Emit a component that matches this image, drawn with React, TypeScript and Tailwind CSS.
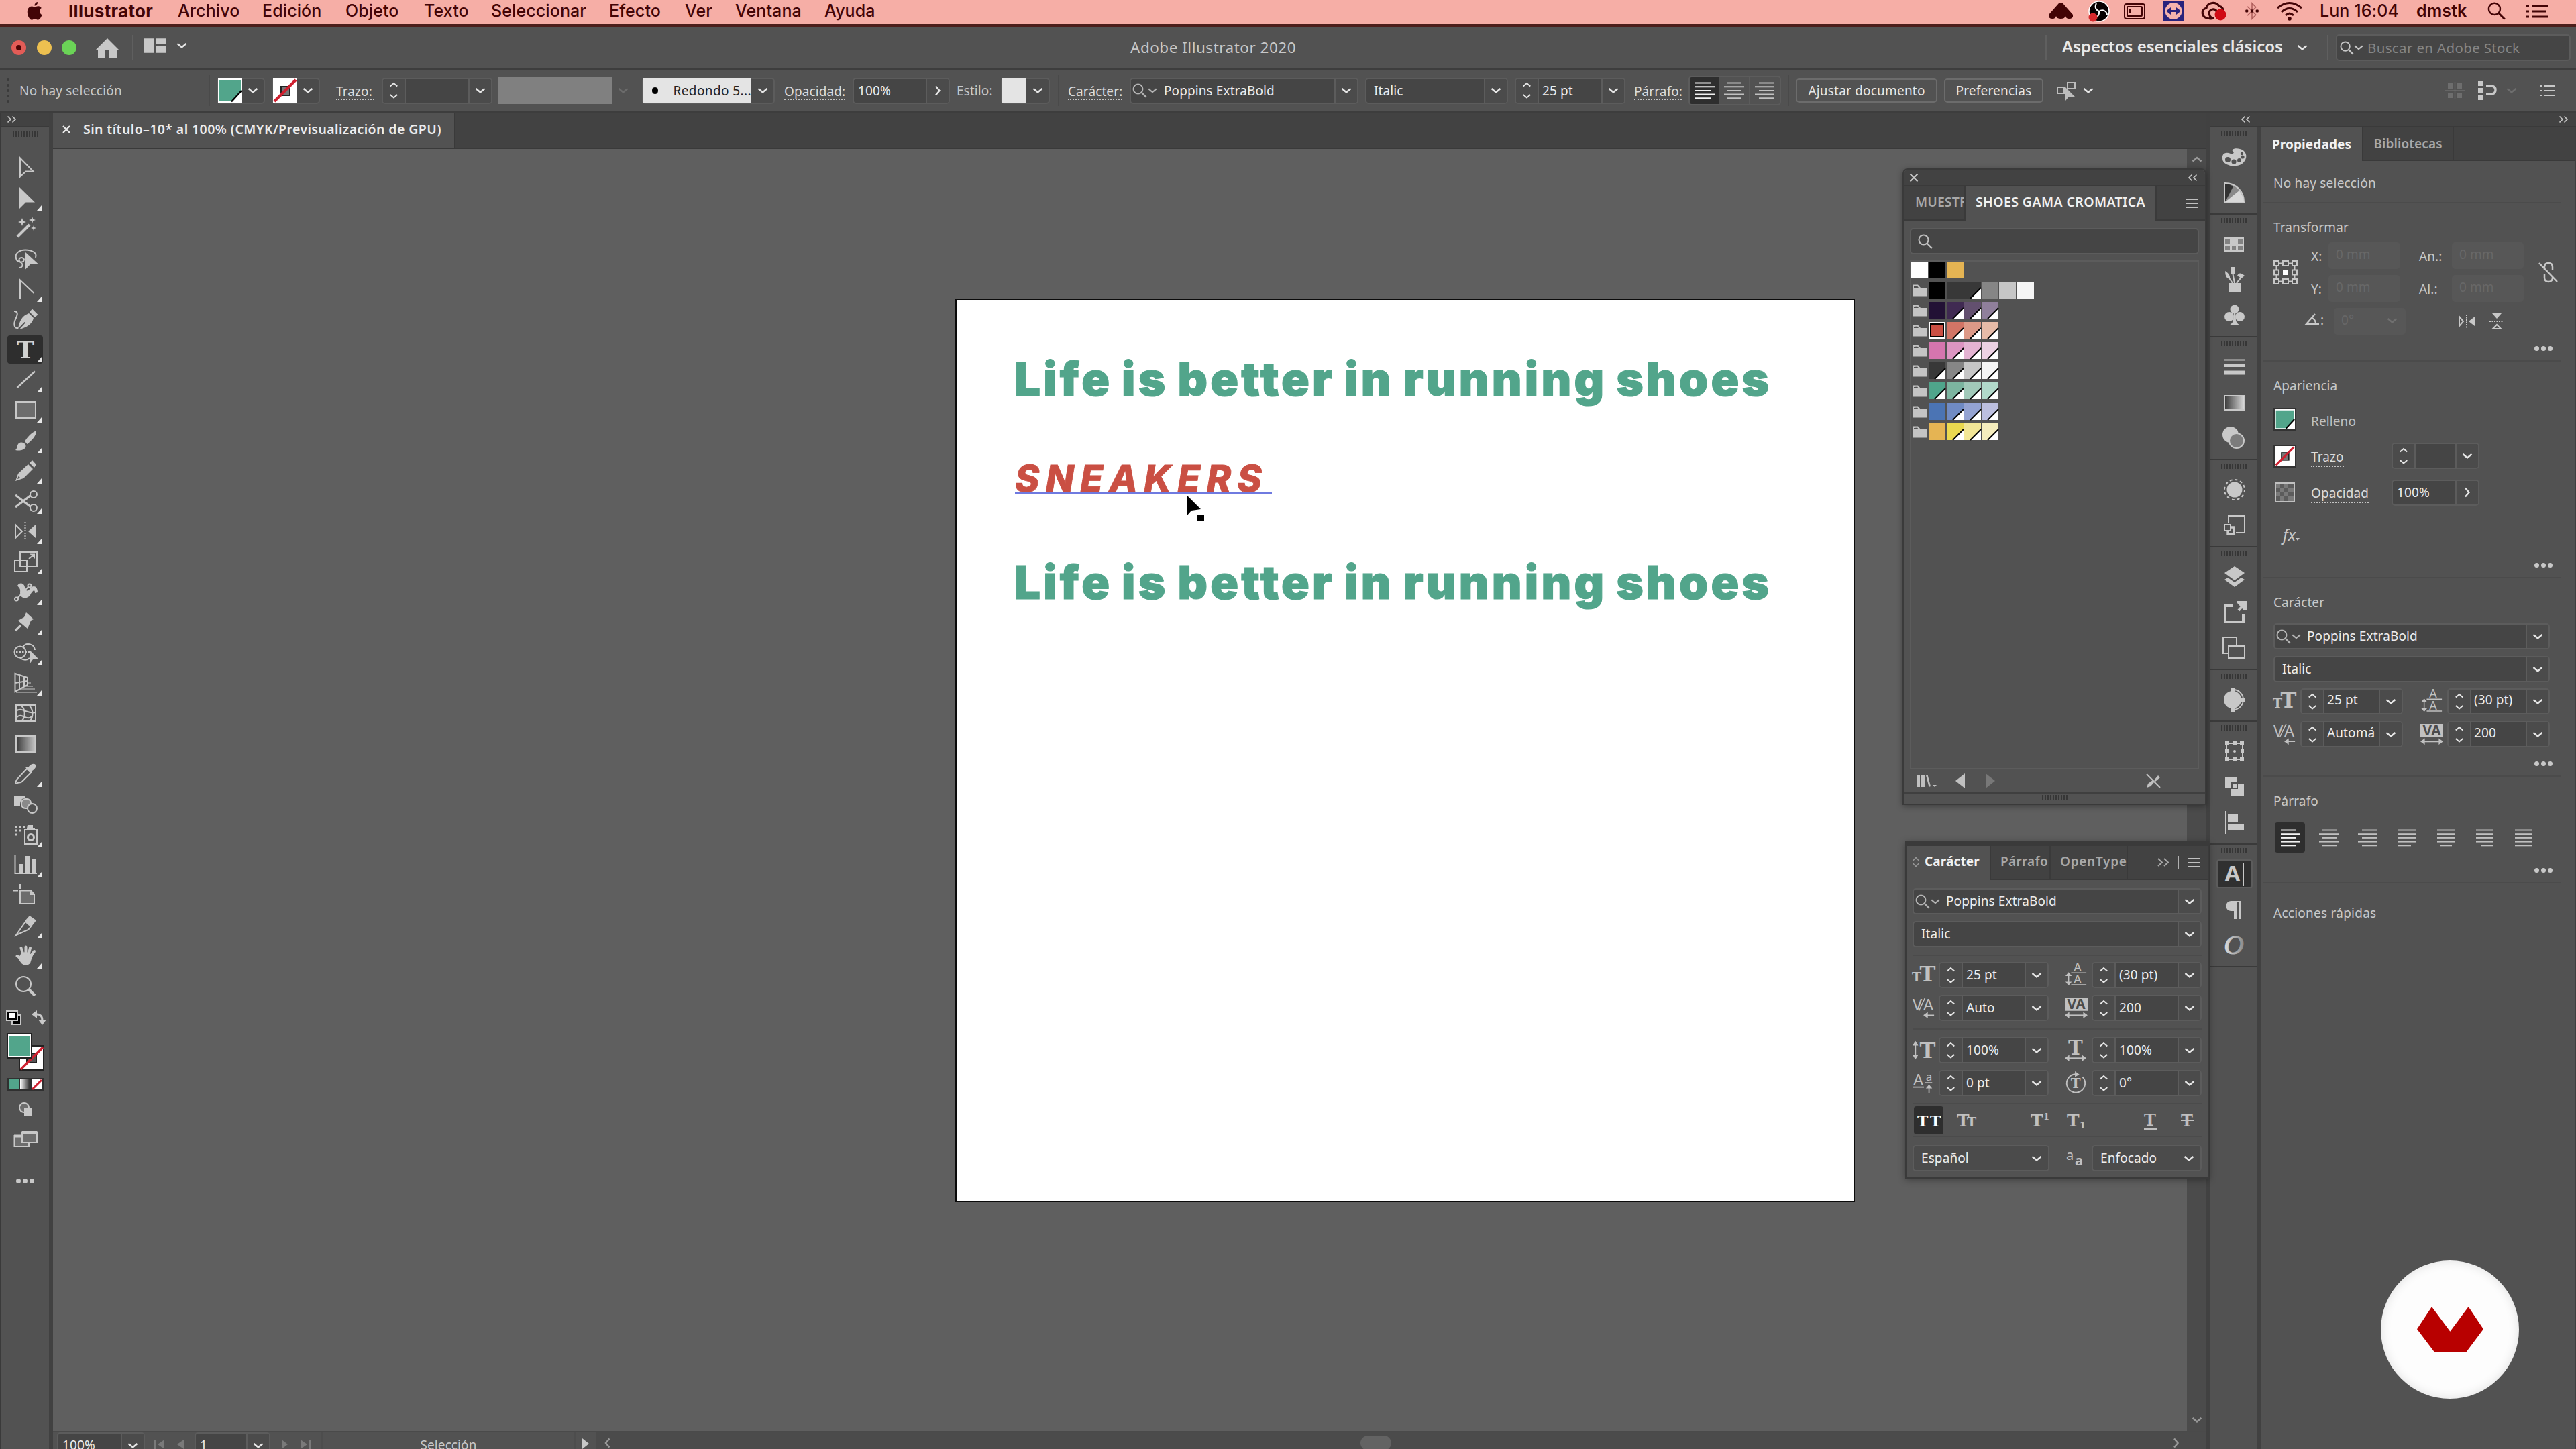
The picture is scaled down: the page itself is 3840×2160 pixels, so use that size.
import type { ReactNode } from "react";

const cx = (...parts: (string | false | undefined)[]) => parts.filter(Boolean).join(" ");

function Svg({ box = "0 0 40 40", className, children }: { box?: string; className?: string; children: ReactNode }) {
  return (
    <svg viewBox={box} className={cx("block shrink-0 overflow-visible", className)} fill="none" stroke="currentColor" strokeWidth={2}>
      {children}
    </svg>
  );
}

function Chevron({ dir = "down", className = "text-[#e6e6e6]" }: { dir?: "down" | "up" | "right" | "left"; className?: string }) {
  const d = {
    down: "M1.5 5 L8 10.5 L14.5 5",
    up: "M1.5 10.5 L8 5 L14.5 10.5",
    right: "M5 1.5 L10.5 8 L5 14.5",
    left: "M10.5 1.5 L5 8 L10.5 14.5",
  }[dir];
  return (
    <Svg box="0 0 16 16" className={cx("size-4", className)}>
      <path d={d} strokeWidth={2.4} />
    </Svg>
  );
}

function Double({ dir, className }: { dir: "left" | "right"; className?: string }) {
  return (
    <Svg box="0 0 14 10" className={cx("h-[10px] w-[14px] text-[#c8c8c8]", className)}>
      <path d={dir === "left" ? "M5.5 0.5 L1 5 L5.5 9.5 M12.5 0.5 L8 5 L12.5 9.5" : "M1.5 0.5 L6 5 L1.5 9.5 M8.5 0.5 L13 5 L8.5 9.5"} strokeWidth={1.7} />
    </Svg>
  );
}

function Magnifier({ className = "size-[22px] text-[#b4b4b4]" }: { className?: string }) {
  return (
    <Svg box="0 0 22 22" className={className}>
      <circle cx="8.5" cy="8.5" r="7" />
      <path d="M13.5 13.5 L21 21" strokeWidth={2.4} />
    </Svg>
  );
}

function Spinner() {
  return (
    <div className="flex w-[34px] shrink-0 flex-col items-center justify-center gap-[4px] border-r-2 border-[#5c5c5c] bg-[#4b4b4b] pr-px">
      <Chevron dir="up" className="h-[13px] w-[14px] text-[#e6e6e6]" />
      <Chevron className="h-[13px] w-[14px] text-[#e6e6e6]" />
    </div>
  );
}

type FieldProps = {
  className?: string;
  value?: string;
  pad?: string;
  spin?: boolean;
  search?: boolean;
  arrow?: "down" | "right";
  plain?: boolean;
};

function Field({ className, value = "", pad = "pl-[6px]", spin, search, arrow = "down", plain }: FieldProps) {
  return (
    <div className={cx("flex h-[39px] shrink-0 overflow-hidden rounded-[5px] border-2 border-[#5c5c5c]", plain ? "bg-[#4b4b4b]" : "bg-[#454545]", className)}>
      {spin && <Spinner />}
      {search && (
        <div className="flex items-center gap-px pl-[2px]">
          <Magnifier />
          <Chevron className="size-[14px] text-[#b4b4b4]" />
        </div>
      )}
      <span className={cx("flex min-w-0 flex-1 items-center overflow-hidden text-[19px] text-[#ededed]", pad)}>{value}</span>
      <div className={cx("flex w-[34px] shrink-0 items-center justify-center bg-[#4b4b4b] pr-px", !plain && "border-l-2 border-[#5c5c5c]")}>
        <Chevron dir={arrow} />
      </div>
    </div>
  );
}

function Grip({ className }: { className?: string }) {
  return (
    <div className={cx("flex h-[8px] gap-[2px]", className)}>
      {Array.from({ length: 10 }, (_, i) => (
        <i key={i} className="h-full w-[2px] bg-[#363636]" />
      ))}
    </div>
  );
}

function Dots({ className }: { className?: string }) {
  return (
    <div className={cx("flex gap-[3px]", className)}>
      {[0, 1, 2].map((i) => (
        <i key={i} className="size-[7px] rounded-full bg-[#c8c8c8]" />
      ))}
    </div>
  );
}

function Burger() {
  return (
    <div className="flex h-[14px] w-[19px] shrink-0 flex-col justify-between">
      <i className="h-[2px] bg-[#c0c0c0]" />
      <i className="h-[2px] bg-[#c0c0c0]" />
      <i className="h-[2px] bg-[#c0c0c0]" />
    </div>
  );
}

function AlignLines({ rows, className = "text-[#c0c0c0]" }: { rows: [number, number][]; className?: string }) {
  return (
    <Svg box="0 0 30 26" className={cx("h-[26px] w-[30px]", className)}>
      {rows.map(([a, b], i) => (
        <path key={i} d={`M${a} ${1.5 + i * 5.7} H${b}`} />
      ))}
    </Svg>
  );
}

const leftRows: [number, number][] = [[1, 24], [1, 30], [1, 24], [1, 30], [1, 24]];
const centerRows: [number, number][] = [[4, 26], [0, 30], [4, 26], [0, 30], [4, 26]];
const rightRows: [number, number][] = [[6, 29], [0, 29], [6, 29], [0, 29], [6, 29]];
const justifyRows = (last: [number, number]): [number, number][] => [[2, 28], [2, 28], [2, 28], [2, 28], last];

function FillSwatch({ className }: { className?: string }) {
  return (
    <Svg box="0 0 36 36" className={className}>
      <path d="M0 0 H36 V36 H0z" fill="#fff" stroke="none" />
      <path d="M2 2 H34 V20 L20 34 H2z" fill="#52a58b" stroke="none" />
      <path d="M20 34.5 L35 18" stroke="#000" strokeWidth={2.5} />
    </Svg>
  );
}

function NoneSwatch({ className }: { className?: string }) {
  return (
    <Svg box="0 0 36 36" className={className}>
      <path d="M0 0 H36 V36 H0z" fill="#fff" stroke="none" />
      <rect x="12" y="12" width="13" height="13" fill="#777" stroke="#222" />
      <path d="M2 34 L34 2" stroke="#cf2030" strokeWidth={4} />
    </Svg>
  );
}

/* ---------- menu bar ---------- */

const menus: [string, string][] = [
  ["Archivo", "w-[126px]"],
  ["Edición", "w-[124px]"],
  ["Objeto", "w-[117px]"],
  ["Texto", "w-[100px]"],
  ["Seleccionar", "w-[176px]"],
  ["Efecto", "w-[113px]"],
  ["Ver", "w-[75px]"],
  ["Ventana", "w-[133px]"],
  ["Ayuda", "w-[90px]"],
];

function MenuBar() {
  return (
    <div className="flex h-[40px] shrink-0 items-center overflow-hidden border-b-4 border-[#4d1e1b] bg-[#f6aea6] pb-[3px] font-['Inter','Noto_Sans',sans-serif] text-[25px] leading-none text-[#430406] [&>*]:shrink-0">
      <Svg box="0 0 24 30" className="ml-[39px] h-[28px] w-[25px]">
        <path d="M12.5 8 C14.5 8 15.5 6.5 18 6.7 C20.5 6.9 22 8.2 23 9.7 C19 12 19.5 18.5 23.8 20.5 C22.5 24.5 20 28.5 17.3 28.5 C15.3 28.5 14.8 27.3 12.5 27.3 C10 27.3 9.5 28.5 7.5 28.5 C4 28.5 0.5 21.5 0.5 16 C0.5 10 4 6.9 7.5 6.9 C9.8 6.9 11 8 12.5 8z M12 6 C11.8 3 14.2 0.2 17 0 C17.3 3 14.8 6 12 6z" fill="currentColor" stroke="none" />
      </Svg>
      <b className="ml-[38px] w-[163px] text-[26px] tracking-[0.3px]">Illustrator</b>
      {menus.map(([name, width]) => (
        <span key={name} className={cx("font-medium", width)}>
          {name}
        </span>
      ))}
      <Svg box="0 0 38 25" className="ml-auto h-[25px] w-[38px]">
        <path d="M16 1 Q19 -1 22 1 L37 18 Q38 24 31 24 Q27 24 26 20 Q25 24 19 24 Q13 24 12 20 Q11 24 7 24 Q0 24 1 18z" fill="currentColor" stroke="none" />
      </Svg>
      <Svg box="0 0 32 32" className="ml-[22px] size-[32px]">
        <circle cx="16" cy="16" r="15" fill="#050000" stroke="#fff" strokeWidth={1.5} />
        <path d="M12 4 C8 12 14 15 16 16 C22 12 28 16 28 22 M16 16 C17 22 12 27 6 25" stroke="#fff" />
        <circle cx="7" cy="25" r="6.5" fill="#d6292d" stroke="none" />
      </Svg>
      <Svg box="0 0 34 26" className="ml-[20px] h-[26px] w-[34px]">
        <rect x="2" y="2" width="30" height="22" rx="3" />
        <rect x="6" y="6" width="22" height="14" rx="1" />
        <path d="M10 10 V16" />
      </Svg>
      <Svg box="0 0 32 32" className="ml-[25px] size-[32px]">
        <rect x="0" y="0" width="32" height="31" rx="2" fill="#28227c" stroke="none" />
        <circle cx="16" cy="15.5" r="12.5" fill="#f3b2ad" stroke="none" />
        <path d="M5 15.5 L12 10 V14 H20 V10 L27 15.5 L20 21 V17 H12 V21z" fill="#28227c" stroke="none" />
      </Svg>
      <Svg box="0 0 40 30" className="ml-[24px] h-[30px] w-[40px]">
        <path d="M12 25 C2 26 0 12 9 10 C11 1 23 0 28 7 C32 8 34 10 34 14" strokeWidth={3.2} />
        <path d="M20 25 C12 25 11 13 18 12 C22 11 24 14 25 17" strokeWidth={3.2} />
        <path d="M12 25 C14 26 17 26 20 25" strokeWidth={3.2} />
        <circle cx="30" cy="20" r="8.5" fill="#d00a14" stroke="none" />
      </Svg>
      <Svg box="0 0 22 30" className="ml-[26px] h-[29px] w-[22px] text-[#b05f5c]">
        <path d="M4 8 L17 21 L11 27 V3 L17 9 L4 22" strokeWidth={1.6} />
        <g fill="#430406" stroke="none">
          <circle cx="3" cy="15" r="2.4" />
          <circle cx="11" cy="15" r="2.4" />
          <circle cx="19" cy="15" r="2.4" />
        </g>
      </Svg>
      <Svg box="0 0 40 28" className="ml-[25px] h-[28px] w-[40px]">
        <path d="M2 9 Q20 -6 38 9 M8 15 Q20 4 32 15 M14 20 Q20 14 26 20" strokeWidth={3} />
        <circle cx="20" cy="25" r="2.8" fill="currentColor" stroke="none" />
      </Svg>
      <span className="ml-[25px] w-[144px] font-medium">Lun 16:04</span>
      <span className="w-[106px] font-semibold">dmstk</span>
      <Magnifier className="size-[27px]" />
      <Svg box="0 0 34 20" className="mr-[41px] ml-[30px] h-[20px] w-[34px]">
        <path d="M9 2 H34 M9 10 H30 M9 18 H34 M0 2 H5 M0 10 H5 M0 18 H5" strokeWidth={3.2} />
      </Svg>
    </div>
  );
}

/* ---------- title bar ---------- */

function TitleBar() {
  return (
    <div className="flex h-[64px] shrink-0 items-center border-b-2 border-[#3d3d3d] [&>*]:shrink-0">
      <i className="ml-[17px] flex size-[22px] items-center justify-center rounded-full bg-[#e25c57]">
        <i className="size-[8px] rounded-full bg-[#4b0404]" />
      </i>
      <i className="ml-[16px] size-[22px] rounded-full bg-[#edc050]" />
      <i className="ml-[15px] size-[22px] rounded-full bg-[#6bd357]" />
      <Svg box="0 0 34 29" className="ml-[29px] h-[29px] w-[34px] text-[#c8c8c8]">
        <path d="M17 0 L34 17 H31 V29 H20 V18 H14 V29 H3 V17 H0z" fill="currentColor" stroke="none" />
      </Svg>
      <i className="ml-[20px] h-[38px] w-[2px] bg-[#5f5f5f]" />
      <Svg box="0 0 34 22" className="mb-[7px] ml-[16px] h-[22px] w-[33px] text-[#c8c8c8]">
        <path d="M0 0 H15 V22 H0z M18 0 H34 V9 H18z M18 12 H34 V22 H18z" fill="currentColor" stroke="none" />
      </Svg>
      <span className="mb-[7px] ml-[15px]">
        <Chevron />
      </span>
      <span className="ml-[1406px] text-[22.5px] tracking-[0.5px] text-[#c8c8c8]">Adobe Illustrator 2020</span>
      <i className="ml-auto h-[38px] w-[2px] bg-[#5f5f5f]" />
      <span className="mb-[4px] ml-[23px] w-[350px] text-[24px] leading-none font-semibold tracking-normal text-[#e8e8e8]">Aspectos esenciales clásicos</span>
      <Chevron />
      <i className="ml-[29px] h-[38px] w-[2px] bg-[#5f5f5f]" />
      <div className="mr-[8px] ml-[11px] flex h-[40px] w-[350px] items-center rounded-[5px] border-2 border-[#5c5c5c] bg-[#454545] pl-[4px]">
        <Magnifier className="size-[21px] text-[#c8c8c8]" />
        <Chevron className="size-[14px] text-[#c8c8c8]" />
        <span className="ml-[6px] text-[20.5px] tracking-[0.35px] text-[#858585]">Buscar en Adobe Stock</span>
      </div>
    </div>
  );
}

/* ---------- control bar ---------- */

function Label({ className, children, dotted = true }: { className?: string; children: ReactNode; dotted?: boolean }) {
  return (
    <span className={cx("text-[19px] leading-[22px]", dotted ? "border-b-2 border-dotted border-[#c4c4c4] pt-[4px] text-[#dcdcdc]" : "text-[#c8c8c8]", className)}>
      {children}
    </span>
  );
}

function SwatchDrop({ className, children }: { className?: string; children: ReactNode }) {
  return (
    <div className={cx("flex h-[39px] items-center rounded-[5px] border-2 border-[#5c5c5c] bg-[#4b4b4b]", className)}>
      {children}
      <span className="flex flex-1 justify-center">
        <Chevron />
      </span>
    </div>
  );
}

function Sep({ className }: { className?: string }) {
  return <i className={cx("h-[46px] w-[2px] bg-[#4a4a4a]", className)} />;
}

function ControlBar() {
  return (
    <div className="flex h-[64px] shrink-0 items-center border-b-2 border-[#3d3d3d] [&>*]:shrink-0">
      <i className="ml-[10px] h-[36px] border-l-4 border-dotted border-[#3a3a3a]" />
      <Label dotted={false} className="ml-[15px] w-[150px] tracking-[0.2px]">
        No hay selección
      </Label>
      <Sep className="ml-[132px]" />
      <SwatchDrop className="ml-[10px] w-[72px]">
        <FillSwatch className="size-[36px]" />
      </SwatchDrop>
      <SwatchDrop className="ml-[10px] w-[72px]">
        <NoneSwatch className="size-[36px]" />
      </SwatchDrop>
      <Label className="ml-[24px] w-[57px]">Trazo:</Label>
      <Field className="ml-[11px] w-[165px]" spin />
      <i className="ml-[9px] h-[40px] w-[169px] bg-[#808080]" />
      <span className="flex w-[34px] justify-center">
        <Chevron className="text-[#6c6c6c]" />
      </span>
      <div className="ml-[11px] flex h-[39px] w-[198px] items-center rounded-[5px] border-2 border-[#5c5c5c] bg-[#4b4b4b]">
        <div className="flex h-[36px] w-[161px] items-center bg-[#e4e4e4] pl-[13px]">
          <i className="size-[10px] rounded-full bg-black" />
          <span className="ml-[22px] text-[19px] tracking-[0.4px] text-[#222]">Redondo 5...</span>
        </div>
        <span className="flex flex-1 justify-center">
          <Chevron />
        </span>
      </div>
      <Label className="ml-[14px] w-[91px]">Opacidad:</Label>
      <Field className="ml-[11px] w-[145px]" value="100%" arrow="right" />
      <Label dotted={false} className="ml-[10px] w-[53px]">
        Estilo:
      </Label>
      <SwatchDrop className="ml-[13px] w-[73px]">
        <i className="size-[36px] bg-[#e4e4e4]" />
      </SwatchDrop>
      <Sep className="ml-[12px]" />
      <Label className="ml-[13px] w-[81px]">Carácter:</Label>
      <Field className="ml-[11px] w-[341px]" value="Poppins ExtraBold" search pad="pl-[10px]" />
      <Field className="ml-[10px] w-[213px]" value="Italic" pad="pl-[11px]" />
      <Field className="ml-[10px] w-[165px]" value="25 pt" spin pad="pl-[5px]" />
      <Label className="ml-[13px] w-[71px]">Párrafo:</Label>
      <div className="ml-[10px] flex h-[44px] w-[138px] items-stretch overflow-hidden rounded-[5px] border-2 border-[#5c5c5c] [&>*]:flex [&>*]:flex-1 [&>*]:items-center [&>*]:justify-center">
        <span className="bg-[#2e2e2e]">
          <AlignLines rows={leftRows} className="text-[#f0f0f0]" />
        </span>
        <span className="border-r-2 border-[#5c5c5c]">
          <AlignLines rows={centerRows} />
        </span>
        <span>
          <AlignLines rows={rightRows} />
        </span>
      </div>
      <Sep className="ml-[10px]" />
      <span className="ml-[10px] flex h-[36px] w-[211px] items-center justify-center rounded-[5px] border-2 border-[#6c6c6c] text-[19px] tracking-[0.2px] text-[#e6e6e6]">Ajustar documento</span>
      <span className="ml-[10px] flex h-[36px] w-[148px] items-center justify-center rounded-[5px] border-2 border-[#6c6c6c] text-[19px] tracking-[0.2px] text-[#e6e6e6]">Preferencias</span>
      <Svg box="0 0 32 30" className="ml-[19px] h-[30px] w-[32px] text-[#bdbdbd]">
        <path d="M17 3 H28 V12 H17z M2 10 H12 V19 H2z" />
        <path d="M14 10 V30 L19 24 H28z" fill="currentColor" stroke="none" />
      </Svg>
      <span className="ml-[8px]">
        <Chevron />
      </span>
      <Svg box="0 0 29 26" className="ml-auto h-[26px] w-[29px] text-[#6e6e6e]">
        <path d="M4 2 H11 V10 H4z M17 2 H25 V10 H17z M4 16 H11 V24 H4z M17 16 H25 V24 H17z" fill="currentColor" stroke="none" />
        <path d="M0 13 H29 M14.5 0 V26" strokeWidth={1.4} />
      </Svg>
      <Svg box="0 0 28 28" className="ml-[20px] size-[28px] text-[#c8c8c8]">
        <path d="M0 0 H8 V7 H0z M0 10 H8 V17 H0z M0 20 H8 V28 H0z" fill="currentColor" stroke="none" />
        <path d="M12 7 H19 Q26 7 26 13 Q26 19 19 19 H12" strokeWidth={3.4} />
      </Svg>
      <span className="ml-[14px]">
        <Chevron className="text-[#6e6e6e]" />
      </span>
      <Svg box="0 0 22 18" className="mr-[32px] ml-[34px] h-[18px] w-[22px] text-[#c8c8c8]">
        <path d="M6 2 H22 M6 9 H22 M6 16 H22 M0 2 H3 M0 9 H3 M0 16 H3" />
      </Svg>
    </div>
  );
}

/* ---------- tools ---------- */

const solid = { fill: "currentColor", stroke: "none" };

const tools: { icon: ReactNode; more?: boolean; active?: boolean }[] = [
  { icon: <path d="M12 5.5 V33.5 L20.5 25.5 H31.5z" /> },
  { icon: <path d="M11 4 V36 L20.5 26.5 H34z" {...solid} />, more: true },
  {
    icon: (
      <>
        <path d="M8 33 L26 15" strokeWidth={4} />
        <path d="M15 5 L16.5 9.5 L21 11 L16.5 12.5 L15 17 L13.5 12.5 L9 11 L13.5 9.5z M30 3 L31.3 6.7 L35 8 L31.3 9.3 L30 13 L28.7 9.3 L25 8 L28.7 6.7z M32 16 L33 19 L36 20 L33 21 L32 24 L31 21 L28 20 L31 19z" {...solid} />
      </>
    ),
  },
  {
    icon: (
      <>
        <path d="M35 18 C38 10 28 6.5 20 6.5 C10 6.5 4 12 6 19 C7 25 17 27 18 21 C17 16 8 18 11 23 C13 27 17 25 15 31 C14 33 12 33 11 33" />
        <path d="M20 10 V35.5 L27.5 27.5 H39z" {...solid} />
      </>
    ),
  },
  { icon: <path d="M12 35 V6.5 L32.5 26" />, more: true },
  {
    icon: (
      <>
        <path d="M3 8 C10 8 8 14 5 20 C2 27 3 34 9 33" />
        <path d="M9 34 C11 22 15 15 25 11 L32 18 C30 27 22 32 11 35 L20 25 L18.5 24z" {...solid} />
        <path d="M26 9 L30 4.5 L38.5 13 L34 17z" {...solid} />
      </>
    ),
  },
  {
    icon: (
      <text x="20" y="33" textAnchor="middle" fontSize="35" fontWeight="700" fill="#d2d2d2" stroke="none" className="font-['DejaVu_Serif',serif]">
        T
      </text>
    ),
    more: true,
    active: true,
  },
  { icon: <path d="M7.5 32 L34 7.5" strokeWidth={2.6} />, more: true },
  { icon: <rect x="6" y="8" width="29" height="24" fill="#6d6d6d" />, more: true },
  {
    icon: <path d="M5 34 C9 31 6 24 13 22.5 C18 22 22 26 20 30 C17 35 10 35 5 34z M19 21 C23 14 29 8 36 5 C36.5 12 30 19 22.5 25z" {...solid} />,
    more: true,
  },
  {
    icon: (
      <>
        <path d="M5 35 L9 24 L24 10 L31 17 L17 31z M8 32 L12 30.5 L10 27z" fillRule="evenodd" {...solid} />
        <path d="M26 8 L30 4 L36 10.5 L33 15z" {...solid} />
      </>
    ),
    more: true,
  },
  {
    icon: (
      <>
        <circle cx="32" cy="10" r="5" />
        <circle cx="32" cy="30" r="5" />
        <path d="M5 11 L27 28 M5 29 L27 12" strokeWidth={3.4} />
      </>
    ),
    more: true,
  },
  {
    icon: (
      <>
        <path d="M5 10 V30 L15 20z" />
        <path d="M19.5 6 V35" strokeDasharray="2 2" />
        <path d="M36 9 V31 L24 20z" {...solid} />
      </>
    ),
    more: true,
  },
  {
    icon: (
      <>
        <rect x="12" y="6" width="25" height="21" />
        <rect x="4" y="19" width="18" height="16" />
        <path d="M25 16 L31 11" />
        <path d="M26 8.5 H34 V16z" {...solid} />
      </>
    ),
    more: true,
  },
  {
    icon: (
      <>
        <path d="M8 10 C11 4 18 6 19 12 C21 20 24 18 27 14 C31 9 38 10 38 20 L34 21 C34 14 30 18 27 24 C22 31 12 30 12 20 C13 14 10 13 8 10z" {...solid} />
        <circle cx="6.5" cy="30" r="2.5" />
        <circle cx="26" cy="10" r="2.5" />
        <path d="M8.5 28 L24 12" />
      </>
    ),
    more: true,
  },
  {
    icon: (
      <>
        <path d="M21 5 L32 15 L28 17 L23 29 L9 17 L18 12z" {...solid} />
        <path d="M5 32 L13 24" strokeWidth={3.4} />
      </>
    ),
    more: true,
  },
  {
    icon: (
      <>
        <path d="M16 12 C20 4 33 6 34 16 M12 28 C18 32 22 32 26 28" />
        <circle cx="12" cy="19" r="8.5" />
        <path d="M6 19 H27" strokeDasharray="2.5 2" />
        <path d="M26 16 V37 L31 30 H40z" {...solid} />
      </>
    ),
    more: true,
  },
  {
    icon: (
      <>
        <path d="M4.5 6 V33 L23 23 V12z M11 8 V30 M18 10 V26 M4.5 20 L23 17" />
        <path d="M23 20 H28 M20 25 H31 M14 29 H34 M6 34 H37" strokeWidth={1.2} />
      </>
    ),
    more: true,
  },
  {
    icon: (
      <>
        <rect x="6" y="8" width="29" height="24" />
        <path d="M12 8 C20 12 21 26 14 32 M25 8 C33 16 31 26 27 32 M6 17 C15 10 22 22 35 19 M6 27 C15 17 22 34 30 24" />
      </>
    ),
  },
  {
    icon: (
      <>
        <defs>
          <linearGradient id="toolGradient">
            <stop offset="0" stopColor="#383838" />
            <stop offset="1" stopColor="#c8c8c8" />
          </linearGradient>
        </defs>
        <rect x="6" y="8" width="29" height="24" fill="url(#toolGradient)" />
      </>
    ),
  },
  {
    icon: (
      <>
        <path d="M22 12 L28 18 L15 31 C12 34 9 31 7 34 C4 34 6 28 9 26z" />
        <path d="M19 9 L24 10 C28 4 35 3 35.5 8 C35 12 31 14 29 16 L30 20z" {...solid} />
      </>
    ),
    more: true,
  },
  {
    icon: (
      <>
        <path d="M3 7 H19 V10 C13 12 12 16 12 22 H3z" {...solid} />
        <rect x="14" y="12" width="14" height="14" rx="6" fill="#8a8a8a" />
        <circle cx="30" cy="26" r="7" fill="#525252" />
      </>
    ),
  },
  {
    icon: (
      <>
        <path d="M19 13 H37 V34 H19z" />
        <path d="M23 6 H31 V11 H34 V14 H22 V11z" {...solid} />
        <circle cx="28" cy="24" r="4.5" strokeWidth={3} />
        <path d="M4 9 H8 M10 9 H14 M16 9 H19 M4 14 H8 M10 14 H14 M4 20 H8" strokeWidth={3.2} />
      </>
    ),
    more: true,
  },
  {
    icon: (
      <>
        <path d="M4.5 5 V33 H37" />
        <path d="M11 19 H17 V32 H11z M20 7 H26.5 V32 H20z M30 11 H36 V32 H30z" {...solid} />
      </>
    ),
    more: true,
  },
  {
    icon: (
      <>
        <path d="M2 13.5 H9 M12 4 V11" />
        <path d="M12 13.5 H28 L33 19 V33 H12z" fill="#6d6d6d" />
        <path d="M26 13 L33.5 20 H26z" {...solid} />
      </>
    ),
  },
  {
    icon: (
      <>
        <path d="M6 34 L20 14 L28 21 L24 26z" />
        <path d="M19 13 L26 5 L36 12 L29 21z" {...solid} />
      </>
    ),
    more: true,
  },
  {
    icon: (
      <>
        <path d="M16 16 L13.5 8 M20.5 15 V6.5 M25 16 L27 8 M28 20 L33 13 M15 25 L7.5 20" strokeWidth={4} strokeLinecap="round" />
        <path d="M13 17 Q20 11 28 17 L31 19 Q28 27 27 31 Q20 37 14 31 L9 24z" {...solid} />
      </>
    ),
    more: true,
  },
  {
    icon: (
      <>
        <circle cx="17" cy="17" r="11" />
        <path d="M25 25 L34 34" strokeWidth={4} />
      </>
    ),
  },
];

function Toolbar() {
  return (
    <div className="flex w-[79px] shrink-0 flex-col border-r-[6px] border-l-2 border-r-[#414141] border-l-[#3a3a3a] text-[#c8c8c8]">
      <div className="flex h-[22px] shrink-0 items-center border-b-2 border-[#3a3a3a] bg-[#424242] pl-[8px]">
        <Double dir="right" />
      </div>
      <Grip className="mt-[6px] ml-[17px]" />
      <div className="mt-[23.4px] flex flex-col">
        {tools.map((tool, i) => (
          <div key={i} className="flex h-[45.2px] items-center pl-[9px]">
            <div className={cx("relative flex h-[42px] w-[53px] items-center justify-center rounded-[4px]", tool.active && "bg-[#2e2e2e]")}>
              <Svg className="size-[40px]">{tool.icon}</Svg>
              {tool.more && (
                <Svg box="0 0 7 8" className="absolute right-[2px] bottom-[2px] h-[8px] w-[7px]">
                  <path d="M7 0 V8 H0z" fill="#e6e6e6" stroke="none" />
                </Svg>
              )}
            </div>
          </div>
        ))}
      </div>
      <div className="mt-[13px] flex items-center justify-between pr-[4px] pl-[7px]">
        <Svg box="0 0 24 22" className="h-[22px] w-[24px]">
          <path d="M9 7 H22 V21 H9z" fill="#000" />
          <path d="M1 1 H17 V15 H1z" fill="#000" />
          <path d="M4 4 H14 V12 H4z" fill="#fff" stroke="none" />
        </Svg>
        <Svg box="0 0 22 22" className="size-[22px]">
          <path d="M6 6 Q16 5 16 15" strokeWidth={3} />
          <path d="M0 6 L8 0 V12z M10 14 H22 L16 22z" {...solid} />
        </Svg>
      </div>
      <Svg box="0 0 56 56" className="mt-[12px] ml-[8px] size-[56px]">
        <rect x="19" y="19" width="36" height="36" fill="#fff" stroke="#222" />
        <rect x="30" y="30" width="14" height="14" fill="#555" stroke="#222" />
        <path d="M21 54 L54 21" stroke="#cf2030" strokeWidth={3.5} />
        <rect x="1" y="1" width="36" height="36" fill="#222" stroke="#222" />
        <rect x="3" y="3" width="32" height="32" fill="#52a58b" stroke="#fff" />
      </Svg>
      <Svg box="0 0 54 19" className="mt-[11px] ml-[9px] h-[19px] w-[54px]">
        <defs>
          <linearGradient id="miniGradient">
            <stop offset="0" stopColor="#fff" />
            <stop offset="1" stopColor="#222" />
          </linearGradient>
        </defs>
        <path d="M0 0 H54 V19 H0z" fill="#303030" stroke="none" />
        <path d="M2 2 H17 V17 H2z" fill="#52a58b" stroke="none" />
        <path d="M19 2 H34 V17 H19z" fill="url(#miniGradient)" stroke="none" />
        <path d="M36 2 H52 V17 H36z" fill="#fff" stroke="none" />
        <path d="M37 17 L51 3" stroke="#cf2030" strokeWidth={3} />
      </Svg>
      <Svg box="0 0 20 20" className="mt-[17px] ml-[26px] size-[20px]">
        <circle cx="8" cy="8" r="7" fill="#6d6d6d" />
        <path d="M8 8 H20 V20 H8z" {...solid} />
      </Svg>
      <Svg box="0 0 36 26" className="mt-[22px] ml-[18px] h-[26px] w-[36px]">
        <path d="M1.5 8 H23 V24 H1.5z" fill="#6d6d6d" />
        <path d="M13 2.5 H35 V18 H13z" fill="#6d6d6d" />
        <path d="M1 8.5 H12 M13 3 H35" strokeWidth={4} />
      </Svg>
      <Dots className="mt-[46px] ml-[22px]" />
    </div>
  );
}

/* ---------- status bar ---------- */

function StatusBar() {
  return (
    <div className="flex h-[27px] shrink-0 items-start overflow-hidden border-t-2 border-[#4a4a4a] bg-[#525252] [&>*]:shrink-0">
      <Field className="ml-[6px] w-[131px]" value="100%" />
      <Svg box="0 0 46 14" className="mt-[11px] ml-[14px] h-[14px] w-[46px] text-[#7a7a7a]">
        <path d="M0 0 H3 V14 H0z M15 0 V14 L5 7z M44 0 V14 L34 7z" {...solid} />
      </Svg>
      <Field className="ml-[14px] w-[113px]" value="1" />
      <Svg box="0 0 46 14" className="mt-[11px] ml-[16px] h-[14px] w-[46px] text-[#7a7a7a]">
        <path d="M1 0 V14 L10 7z M29 0 V14 L39 7z M41 0 H44 V14 H41z" {...solid} />
      </Svg>
      <i className="ml-[14px] h-full w-[2px] bg-[#4d4d4d]" />
      <span className="mt-[5px] w-[375px] text-center text-[19px] text-[#c8c8c8]">Selección</span>
      <i className="h-full w-[2px] bg-[#4d4d4d]" />
      <Svg box="0 0 10 16" className="mt-[9px] ml-[10px] h-[16px] w-[10px] text-[#c8c8c8]">
        <path d="M0 0 V16 L10 8z" {...solid} />
      </Svg>
      <div className="ml-[11px] flex h-full flex-1 items-center bg-[#4b4b4b] pt-[6px]">
        <Chevron dir="left" className="ml-[9px] text-[#9a9a9a]" />
        <i className="ml-[1114px] h-[22px] w-[46px] rounded-full bg-[#636363]" />
        <Chevron dir="right" className="mr-[37px] ml-auto text-[#9a9a9a]" />
      </div>
    </div>
  );
}

/* ---------- dock ---------- */

const dock: { icon: ReactNode; active?: boolean }[][] = [
  [
    {
      icon: (
        <>
          <path d="M2 22 C1 14 8 12 14 15 C19 16 20 13 17 11 C15 8 22 6 28 8 C37 10 40 19 35 26 C30 34 18 35 11 32 C5 30 2 27 2 22z" {...solid} />
          <g fill="#525252" stroke="none">
            <circle cx="10" cy="24" r="4" />
            <circle cx="19" cy="27" r="3.6" />
            <circle cx="27" cy="25" r="3" />
            <circle cx="32" cy="20" r="2.6" />
            <circle cx="31" cy="15" r="2.2" />
          </g>
        </>
      ),
    },
    {
      icon: (
        <>
          <path d="M6 6 V34 H34 C34 18 22 6 6 6z" fill="#8a8a8a" />
          <path d="M6 34 V7 C11 7 15 9 18 11z" fill="#333" stroke="none" />
          <path d="M6 34 L27 17 C31 22 33 27 34 34z" fill="#d8d8d8" stroke="none" />
        </>
      ),
    },
  ],
  [
    {
      icon: (
        <>
          <path d="M4 10 H34 V31 H4z" {...solid} />
          <path d="M6 12 H13 V19 H6z M25 12 H32 V19 H25z M6 22 H13 V29 H6z M16 22 H22 V29 H16z M25 22 H32 V29 H25z" fill="#828282" stroke="none" />
        </>
      ),
    },
    {
      icon: (
        <>
          <path d="M11 25 H29 V39 H11z" {...solid} />
          <path d="M17 25 L9 13 M20 25 L17 9 M23 25 L32 14" />
          <path d="M6 7 Q14 12 13 19 Q6 18 6 7z M14 1 H20 L21 12 H15z M24 14 Q27 7 35 14 L30 18z" {...solid} />
        </>
      ),
    },
    {
      icon: (
        <>
          <circle cx="20" cy="11" r="6.5" {...solid} />
          <circle cx="12" cy="22" r="7" {...solid} />
          <circle cx="28" cy="22" r="7" {...solid} />
          <path d="M19 14 H21 L22 27 Q23 33 29 35 H11 Q17 33 18 27z" {...solid} />
        </>
      ),
    },
  ],
  [
    {
      icon: (
        <>
          <path d="M4 9.5 H36" strokeWidth={2} />
          <path d="M4 18 H36" strokeWidth={4} />
          <path d="M4 28.5 H36" strokeWidth={6} />
        </>
      ),
    },
    {
      icon: (
        <>
          <defs>
            <linearGradient id="dockGradient">
              <stop offset="0" stopColor="#383838" />
              <stop offset="1" stopColor="#dedede" />
            </linearGradient>
          </defs>
          <rect x="5" y="10" width="30" height="21" fill="url(#dockGradient)" />
        </>
      ),
    },
    {
      icon: (
        <>
          <circle cx="14" cy="15" r="12" {...solid} />
          <circle cx="23" cy="24" r="11" fill="#7c7c7c" />
        </>
      ),
    },
  ],
  [
    {
      icon: (
        <>
          <circle cx="20" cy="20" r="11.5" {...solid} />
          <circle cx="20" cy="20" r="15" strokeDasharray="4 3.85" />
        </>
      ),
    },
    {
      icon: (
        <>
          <path d="M11 17 V6 H35 V31 H22" />
          <path d="M5 19 H14 V28 H5z" />
          <path d="M14 23 H19 V33 H10 V28" strokeWidth={3.4} />
        </>
      ),
    },
  ],
  [
    { icon: <path d="M20 4 L35 14 L20 25 L5 14z M5 24 L10 21 L20 28 L30 21 L35 24 L20 35z" {...solid} /> },
    {
      icon: (
        <>
          <path d="M18 10 H6 V34 H33 V22" strokeWidth={4} />
          <path d="M26 17 L34 8" strokeWidth={4} />
          <path d="M24 3 H38 V17 H34 L24 6z" {...solid} />
        </>
      ),
    },
    {
      icon: (
        <>
          <path d="M10 28 H3 V4 H23 V15" />
          <path d="M11 17 H35 V35 H11z" />
        </>
      ),
    },
  ],
  [
    {
      icon: (
        <>
          <circle cx="17" cy="20" r="13" {...solid} />
          <path d="M18 5 A15 15 0 0 1 18 35" strokeWidth={1.8} />
          <path d="M15 2 H21 V8 H15z M30 17 H36 V23 H30z M15 32 H21 V38 H15z" {...solid} />
        </>
      ),
    },
  ],
  [
    {
      icon: (
        <>
          <rect x="8" y="8" width="24" height="24" />
          <path d="M6 5 H12 V11 H6z M17 5 H23 V11 H17z M28 5 H34 V11 H28z M6 17 H11 V23 H6z M29 17 H34 V23 H29z M6 29 H12 V35 H6z M17 29 H23 V35 H17z M28 29 H34 V35 H28z" {...solid} />
          <circle cx="20" cy="20" r="2" {...solid} />
        </>
      ),
    },
    { icon: <path d="M6 6 H23 V13 H15 V21 H6z M15 34 V23 H25 V15 H34 V34z M17 15 H23 V21 H17z" {...solid} /> },
    {
      icon: (
        <>
          <path d="M7 3 V37" />
          <path d="M10 8 H25 V19 H10z M10 23 H34 V32 H10z" {...solid} />
        </>
      ),
    },
  ],
  [
    {
      active: true,
      icon: (
        <>
          <text x="17" y="30.5" textAnchor="middle" fontSize="33" fontWeight="700" {...solid} className="font-['Noto_Sans',sans-serif]">
            A
          </text>
          <path d="M33 3 V37" />
        </>
      ),
    },
    {
      icon: (
        <>
          <path d="M24 7 H15 C5 7 5 22 15 22 H19 V34 H24z" {...solid} />
          <path d="M28 7 V34" />
          <path d="M15 8 H29" />
        </>
      ),
    },
    {
      icon: (
        <>
          <defs>
            <linearGradient id="openTypeGradient">
              <stop offset="0" stopColor="#e0e0e0" />
              <stop offset="1" stopColor="#8a8a8a" />
            </linearGradient>
          </defs>
          <text x="19" y="33" textAnchor="middle" fontSize="41" fill="url(#openTypeGradient)" stroke="url(#openTypeGradient)" strokeWidth={1} className="font-['Liberation_Serif',serif] italic">
            O
          </text>
        </>
      ),
    },
  ],
];

function Dock() {
  return (
    <div className="flex w-[75px] shrink-0 flex-col border-r-[6px] border-[#414141] text-[#c8c8c8]">
      {dock.map((group, i) => (
        <div key={i} className="flex shrink-0 flex-col border-b-2 border-[#3a3a3a] pt-[5px] pb-[5px]">
          <Grip className="ml-[16px]" />
          <div className="mt-[4px] flex flex-col">
            {group.map((item, j) => (
              <div key={j} className="flex h-[53px] items-center justify-center pl-[3px]">
                <div className={cx("flex h-[43px] w-[54px] items-center justify-center rounded-[4px]", item.active && "border-2 border-[#5c5c5c] bg-[#303030]")}>
                  <Svg className="size-[40px]">{item.icon}</Svg>
                </div>
              </div>
            ))}
          </div>
        </div>
      ))}
    </div>
  );
}

/* ---------- character icons ---------- */

const serif = "font-['DejaVu_Serif',serif] font-bold";

const charIcons: Record<string, ReactNode> = {
  size: (
    <g {...solid} className={serif}>
      <text x="-1" y="31" fontSize="20">T</text>
      <text x="11" y="31" fontSize="34">T</text>
    </g>
  ),
  leading: (
    <>
      <g {...solid} className="font-['Noto_Sans',sans-serif]">
        <text x="14" y="15" fontSize="19">A</text>
        <text x="14" y="34" fontSize="19">A</text>
      </g>
      <path d="M10 17 H34 M10 36 H34 M6 20 V34" strokeWidth={1.6} />
      <path d="M1 22 H11 L6 16z M1 31 H11 L6 37z" {...solid} />
    </>
  ),
  kerning: (
    <>
      <g {...solid} className="font-['Noto_Sans',sans-serif]">
        <text x="0" y="24" fontSize="25">V</text>
        <text x="17" y="24" fontSize="25">A</text>
      </g>
      <path d="M10 25 L20 4 M20 32 H34" strokeWidth={1.6} />
      <path d="M24 27 V37 L17 32z" {...solid} />
    </>
  ),
  tracking: (
    <>
      <path d="M0 4 H36 V25 H0z" {...solid} />
      <text x="18" y="22.5" textAnchor="middle" fontSize="22" fill="#4b4b4b" stroke="none" className="font-['Noto_Sans',sans-serif] font-bold">
        VA
      </text>
      <path d="M4 32 H32" />
      <path d="M7 27 V37 L0 32z M29 27 V37 L36 32z" {...solid} />
    </>
  ),
  vscale: (
    <>
      <text x="11" y="33" fontSize="34" {...solid} className={serif}>
        T
      </text>
      <path d="M4.5 9 V31" />
      <path d="M0 13 H9 L4.5 6z M0 28 H9 L4.5 35z" {...solid} />
    </>
  ),
  hscale: (
    <>
      <text x="17" y="27" textAnchor="middle" fontSize="31" {...solid} className={serif}>
        T
      </text>
      <path d="M4 33 H31" />
      <path d="M7 28 V38 L0 33z M27 28 V38 L34 33z" {...solid} />
    </>
  ),
  baseline: (
    <>
      <g {...solid} className="font-['Noto_Sans',sans-serif]">
        <text x="1" y="24" fontSize="25">A</text>
        <text x="21" y="17" fontSize="18">a</text>
      </g>
      <path d="M1 27 H18 M20 20 H31 M26 26 V37" strokeWidth={1.8} />
      <path d="M21 29 H31 L26 23z" {...solid} />
    </>
  ),
  rotate: (
    <>
      <text x="17" y="28" textAnchor="middle" fontSize="21" {...solid} className={serif}>
        T
      </text>
      <path d="M28 11 A14.5 14.5 0 1 1 17 6.5" />
      <path d="M16 2 V11 L23 7z" {...solid} />
    </>
  ),
};

function CharIcon({ name, className }: { name: string; className?: string }) {
  return (
    <Svg box="0 0 36 40" className={cx("h-[38px] w-[34px] text-[#c0c0c0]", className)}>
      {charIcons[name]}
    </Svg>
  );
}

/* ---------- properties panel ---------- */

function Section({ title, className, children, dots = true }: { title: string; className?: string; children?: ReactNode; dots?: boolean }) {
  return (
    <section className={cx("flex shrink-0 flex-col border-b-2 border-[#4b4b4b]", className)}>
      <h2 className="mt-[24px] h-[24px] text-[19px] leading-[24px] text-[#c8c8c8]">{title}</h2>
      {children}
      {dots && <Dots className="mt-auto mr-[13px] mb-[14px] justify-end" />}
    </section>
  );
}

function Disabled({ className, children }: { className?: string; children: ReactNode }) {
  return <span className={cx("flex h-[40px] w-[107px] items-center rounded-[5px] bg-[#575757] pb-[3px] pl-[11px] text-[19px] text-[#686868]", className)}>{children}</span>;
}

function XY({ a, b }: { a: string; b: string }) {
  return (
    <div className="flex items-center text-[19px] text-[#c8c8c8]">
      <span className="w-[26px] pt-[3px]">{a}</span>
      <Disabled>0 mm</Disabled>
      <span className="w-[77px] pt-[3px] pl-[28px]">{b}</span>
      <Disabled>0 mm</Disabled>
    </div>
  );
}

function PropertiesPanel() {
  return (
    <div className="flex flex-1 flex-col border-r-2 border-[#3f3f3f]">
      <div className="flex h-[50px] shrink-0 bg-[#424242] text-[19px]">
        <span className="flex w-[151px] items-center justify-center bg-[#525252] pl-px font-bold text-[#f2f2f2]">Propiedades</span>
        <span className="flex w-[137px] items-center justify-center border-r-2 border-b-2 border-l-2 border-[#3a3a3a] font-semibold text-[#a8a8a8]">Bibliotecas</span>
        <span className="flex-1 border-b-2 border-[#3a3a3a]" />
      </div>
      <div className="mr-[20px] ml-[3px] flex flex-col [&>*]:pl-[16px]">
        <div className="flex h-[63px] items-center border-b-2 border-[#4b4b4b] pt-[5px] text-[19px] tracking-[0.2px] text-[#c8c8c8]">No hay selección</div>

        <Section title="Transformar" className="h-[236px]">
          <div className="mt-[10px] flex items-center">
            <Svg box="0 0 36 36" className="size-[36px] text-[#c8c8c8]">
              <path d="M1 1 H8 V8 H1z M14 1 H22 V8 H14z M28 1 H35 V8 H28z M1 14.5 H8 V21.5 H1z M28 14.5 H35 V21.5 H28z M1 28 H8 V35 H1z M14 28 H22 V35 H14z M28 28 H35 V35 H28z" />
              <path d="M8 4.5 H14 M22 4.5 H28 M8 31.5 H14 M22 31.5 H28 M4.5 8 V14 M4.5 22 V28 M31.5 8 V14 M31.5 22 V28" />
              <path d="M14 14 H22 V22 H14z" fill="#fff" stroke="none" />
            </Svg>
            <div className="ml-[20px] flex flex-col gap-[9px]">
              <XY a="X:" b="An.:" />
              <XY a="Y:" b="Al.:" />
            </div>
            <Svg box="0 0 28 32" className="ml-[23px] h-[32px] w-[28px] text-[#c8c8c8]">
              <path d="M8 12 V8 Q8 2 14 2 Q20 2 20 8 V13 M8 19 V24 Q8 30 14 30 Q20 30 20 24 V22 M0 2 L27 30" strokeWidth={2.5} />
            </Svg>
          </div>
          <div className="mt-[9px] flex items-center text-[19px] text-[#c8c8c8]">
            <Svg box="0 0 22 18" className="mb-[6px] ml-[47px] h-[18px] w-[22px]">
              <path d="M15 1 L2 16 H21 M11 7 Q16 10 16 16" strokeWidth={2.2} />
            </Svg>
            <span className="mb-[4px] ml-[1px] w-[20px]">:</span>
            <Disabled className="justify-between pr-[12px]">
              0°
              <Chevron className="text-[#707070]" />
            </Disabled>
            <Svg box="0 0 26 22" className="ml-[78px] h-[22px] w-[26px]">
              <path d="M2 4 V18 L8 11z" />
              <path d="M13 1 V22" strokeDasharray="2 1.5" />
              <path d="M25 4 V18 L16 11z" {...solid} />
            </Svg>
            <Svg box="0 0 22 26" className="ml-[21px] h-[26px] w-[22px]">
              <path d="M4 1 H18 L11 9z" {...solid} />
              <path d="M0 13 H22" strokeDasharray="2 1.5" />
              <path d="M5 24 H17 L11 18z" />
            </Svg>
          </div>
        </Section>

        <Section title="Apariencia" className="h-[323px]">
          <div className="mt-[11px] flex flex-col text-[19px] [&>*]:flex [&>*]:h-[54.5px] [&>*]:items-center">
            <div>
              <span className="border-2 border-[#333]">
                <FillSwatch className="size-[30px]" />
              </span>
              <span className="mt-[6px] ml-[22px] text-[#c0c0c0]">Relleno</span>
            </div>
            <div>
              <span className="border-2 border-[#333]">
                <NoneSwatch className="size-[30px]" />
              </span>
              <span className="mt-[2px] ml-[22px] w-[120px]">
                <Label>Trazo</Label>
              </span>
              <Field className="w-[131px]" spin />
            </div>
            <div>
              <Svg box="0 0 30 30" className="ml-[2px] size-[30px] text-[#c0c0c0]">
                <rect x="1" y="1" width="28" height="28" fill="#5c5c5c" />
                <path d="M2 2 H8 V8 H2z M14 2 H20 V8 H14z M8 8 H14 V14 H8z M20 8 H28 V14 H20z M2 14 H8 V20 H2z M14 14 H20 V20 H14z M8 20 H14 V28 H8z M20 20 H28 V28 H20z" fill="#7a7a7a" stroke="none" />
              </Svg>
              <span className="mt-[2px] ml-[24px] w-[120px]">
                <Label>Opacidad</Label>
              </span>
              <Field className="w-[131px]" value="100%" arrow="right" />
            </div>
            <div className="mt-[8px] ml-[14px] text-[#c8c8c8]">
              <span className="font-['Noto_Sans',sans-serif] text-[24px] italic">fx</span>
              <i className="mt-[14px] border-x-[3px] border-t-4 border-x-transparent border-t-[#c8c8c8]" />
            </div>
          </div>
        </Section>

        <Section title="Carácter" className="h-[296px]">
          <Field className="mt-[19px] w-[412px]" value="Poppins ExtraBold" search pad="pl-[9px]" />
          <Field className="mt-[10px] w-[412px]" value="Italic" pad="pl-[11px]" />
          <div className="mt-[9px] flex">
            <CharIcon name="size" />
            <Field className="ml-[6px] w-[153px]" value="25 pt" spin pad="pb-[4px] pl-[4px]" />
            <CharIcon name="leading" className="ml-[26px]" />
            <Field className="ml-[6px] w-[153px]" value="(30 pt)" spin pad="pb-[4px] pl-[4px]" />
          </div>
          <div className="mt-[10px] flex">
            <CharIcon name="kerning" />
            <Field className="ml-[6px] w-[153px]" value="Automá" spin pad="pb-[4px] pl-[4px]" />
            <CharIcon name="tracking" className="ml-[26px]" />
            <Field className="ml-[6px] w-[153px]" value="200" spin pad="pb-[4px] pl-[4px]" />
          </div>
        </Section>

        <Section title="Párrafo" className="h-[159px]">
          <div className="mt-[20px] flex gap-[13px] text-[#c0c0c0] [&>*]:flex [&>*]:h-[45px] [&>*]:w-[45px] [&>*]:items-center [&>*]:justify-center">
            <span className="ml-[2px] rounded-[4px] bg-[#2e2e2e]">
              <AlignLines rows={leftRows} className="text-[#f2f2f2]" />
            </span>
            {[centerRows, rightRows, justifyRows([2, 21]), justifyRows([6, 24]), justifyRows([9, 28]), justifyRows([2, 28])].map((rows, i) => (
              <span key={i}>
                <AlignLines rows={rows} />
              </span>
            ))}
          </div>
        </Section>
        <h2 className="mt-[32px] text-[19px] leading-[24px] tracking-[0.25px] text-[#c8c8c8]">Acciones rápidas</h2>
      </div>
    </div>
  );
}

/* ---------- floating panels ---------- */

const palette: string[][] = [
  ["#000000", "#383838", "#383838/", "#868686", "#c6c6c6", "#f5f5f5"],
  ["#221135", "#402a52/", "#63506f/", "#8f7f9b/"],
  ["#ca4f43!", "#d37566/", "#dd9987/", "#e6bba8/"],
  ["#d575ae", "#dd95c2/", "#e4b3d2/", "#ecd1e3/"],
  ["#383838/", "#868686/", "#c6c6c6/", "#f5f5f5/"],
  ["#4fa58b/", "#7cb5a0/", "#a1c9b9/", "#b1d9ca/"],
  ["#4b74b4", "#708bc4/", "#94a3d2/", "#bcbfdf/"],
  ["#e5b453", "#ebd94f/", "#f2e696/", "#f5edbd/"],
];

// A trailing "/" is a tint with its white corner, "!" is the selected swatch.
function Swatch({ code }: { code: string }) {
  const color = code.slice(0, 7);
  return (
    <Svg box="0 0 25 25" className="size-[25px]">
      <path d="M0 0 H25 V25 H0z" fill={color} stroke="none" />
      {code.endsWith("/") && (
        <>
          <path d="M10 25 L25 9 V25z" fill="#fff" stroke="none" />
          <path d="M9 25 L25 9" stroke="#000" />
        </>
      )}
      {code.endsWith("!") && (
        <>
          <rect x="1" y="1" width="23" height="23" stroke="#fff" />
          <rect x="3" y="3" width="19" height="19" stroke="#000" />
        </>
      )}
    </Svg>
  );
}

function SwatchesPanel() {
  return (
    <div className="absolute top-[251px] left-[2836px] flex h-[949px] w-[453px] flex-col rounded-t-[8px] border-2 border-[#3a3a3a] bg-[#525252] shadow-[0_2px_10px_rgba(0,0,0,0.35)]">
      <div className="flex h-[25px] shrink-0 items-center justify-between rounded-t-[7px] border-b-2 border-[#3a3a3a] bg-[#424242] pr-[11px] pl-[9px]">
        <Svg box="0 0 12 12" className="size-[12px] text-[#c8c8c8]">
          <path d="M0.5 0.5 L11.5 11.5 M11.5 0.5 L0.5 11.5" />
        </Svg>
        <Double dir="left" />
      </div>
      <div className="flex h-[51px] shrink-0 text-[19.5px] font-semibold">
        <span className="flex w-[92px] items-center overflow-hidden border-r-2 border-b-2 border-[#3a3a3a] bg-[#424242] pb-[3px] pl-[17px] text-[#a8a8a8]">MUESTR</span>
        <span className="flex w-[283px] items-center justify-center pb-[5px] tracking-[0.4px] text-[#f0f0f0]">SHOES GAMA CROMATICA</span>
        <span className="flex flex-1 items-center justify-end border-b-2 border-l-2 border-[#3a3a3a] bg-[#424242] pr-[10px]">
          <Burger />
        </span>
      </div>
      <div className="mt-[11px] ml-[9px] flex h-[39px] w-[431px] shrink-0 items-center rounded-[5px] border-2 border-[#5c5c5c] bg-[#454545] pl-[10px]">
        <Magnifier className="size-[22px] text-[#c0c0c0]" />
      </div>
      <div className="mt-[9px] ml-[9px] flex h-[759px] w-[431px] shrink-0 flex-col border-2 border-[#5c5c5c]">
        <div className="flex gap-[1.3px] pb-[5px]">
          <Swatch code="#ffffff" />
          <Swatch code="#000000" />
          <Swatch code="#e5b453" />
        </div>
        {palette.map((row, i) => (
          <div key={i} className="flex items-center gap-[1.3px] pb-[5.1px]">
            <Svg box="0 0 25 25" className="size-[25px] text-[#c4c4c4]">
              <path d="M2 4.5 H10 L14 9 H23 V21.5 H2z M4 7 V9 H11 L9 6.5z" fillRule="evenodd" {...solid} />
            </Svg>
            {row.map((code, j) => (
              <Swatch key={j} code={code} />
            ))}
          </div>
        ))}
      </div>
      <div className="flex h-[37px] shrink-0 items-center border-b-[3px] border-[#3f3f3f] text-[#c0c0c0]">
        <Svg box="0 0 30 22" className="ml-[19px] h-[22px] w-[30px]">
          <path d="M1 2 H5 V20 H1z M7 2 H12 V20 H7z M14 3 L16.5 2 L21 19 L18.5 20z M24 17 H30 L27 20z" {...solid} />
        </Svg>
        <Svg box="0 0 14 22" className="ml-[28px] h-[22px] w-[14px]">
          <path d="M14 0 V22 L0 11z" {...solid} />
        </Svg>
        <Svg box="0 0 14 22" className="ml-[31px] h-[22px] w-[14px] text-[#787878]">
          <path d="M0 0 V22 L14 11z" {...solid} />
        </Svg>
        <Svg box="0 0 22 22" className="ml-[225px] size-[22px]">
          <path d="M12 10 L18 3 L21 6 L14 12z M1 21 L3 15 L10 10 L12 13 L7 19z" {...solid} />
          <path d="M1 1 L21 21" />
        </Svg>
      </div>
      <Grip className="mt-px ml-[206px]" />
    </div>
  );
}

function NumRow({ className, left, right }: { className?: string; left: [string, string]; right: [string, string] }) {
  return (
    <div className={cx("flex", className)}>
      <CharIcon name={left[0]} />
      <Field className="ml-[5px] w-[164px]" value={left[1]} spin pad="pl-[5px]" />
      <CharIcon name={right[0]} className="ml-[24px]" />
      <Field className="ml-[6px] w-[164px]" value={right[1]} spin pad="pl-[5px]" />
    </div>
  );
}

function CaseIcon({ className, children }: { className?: string; children: ReactNode }) {
  return (
    <svg viewBox="0 0 44 42" className={cx("h-[42px] w-[44px] shrink-0 overflow-visible fill-current font-['DejaVu_Serif',serif] font-bold", className)}>
      {children}
    </svg>
  );
}

function CharacterPanel() {
  return (
    <div className="absolute top-[1254px] left-[2840px] flex h-[503px] w-[453px] flex-col border-2 border-t-[7px] border-[#3a3a3a] bg-[#525252] shadow-[0_2px_10px_rgba(0,0,0,0.35)]">
      <div className="flex h-[51px] shrink-0 bg-[#424242] text-[19px] font-semibold text-[#a8a8a8] [&>*]:flex [&>*]:items-center">
        <span className="w-[124px] bg-[#525252] pb-[4px] pl-[8px] font-bold text-[#f2f2f2]">
          <Svg box="0 0 12 18" className="mr-[7px] h-[16px] w-[12px] text-[#9a9a9a]">
            <path d="M1 7 L6 1.5 L11 7 M1 11 L6 16.5 L11 11" strokeWidth={1.6} />
          </Svg>
          Carácter
        </span>
        <span className="w-[91px] border-r-2 border-b-2 border-l-2 border-[#3a3a3a] pb-[2px] pl-[14px] tracking-[0.3px]">Párrafo</span>
        <span className="w-[115px] border-r-2 border-b-2 border-[#3a3a3a] pb-[2px] pl-[14px] tracking-[0.7px]">OpenType</span>
        <span className="flex-1 border-b-2 border-[#3a3a3a] pl-[44px]">
          <Svg box="0 0 18 13" className="h-[13px] w-[18px]">
            <path d="M1 1 L7 6.5 L1 12 M10 1 L16 6.5 L10 12" />
          </Svg>
          <i className="mr-[13px] ml-[12px] h-[20px] w-[2px] bg-[#b0b0b0]" />
          <Burger />
        </span>
      </div>
      <div className="flex flex-col px-[9px] [&>*]:shrink-0">
        <Field className="mt-[12px] w-[431px]" value="Poppins ExtraBold" search pad="pl-[9px]" />
        <Field className="mt-[10px] w-[431px]" value="Italic" pad="pl-[11px]" />
        <hr className="mt-[11px] border-t-2 border-[#4b4b4b]" />
        <NumRow className="mt-[9px]" left={["size", "25 pt"]} right={["leading", "(30 pt)"]} />
        <NumRow className="mt-[10px]" left={["kerning", "Auto"]} right={["tracking", "200"]} />
        <hr className="mt-[11px] border-t-2 border-[#4b4b4b]" />
        <NumRow className="mt-[11px]" left={["vscale", "100%"]} right={["hscale", "100%"]} />
        <NumRow className="mt-[10px]" left={["baseline", "0 pt"]} right={["rotate", "0°"]} />
        <hr className="mt-[10px] border-t-2 border-[#4b4b4b]" />
        <div className="mt-[3px] flex text-[#c0c0c0]">
          <span className="ml-[2px] rounded-[4px] bg-[#2e2e2e] text-white">
            <CaseIcon>
              <text x="5" y="30" fontSize="22">T</text>
              <text x="24" y="30" fontSize="22">T</text>
            </CaseIcon>
          </span>
          <CaseIcon className="ml-[12px]">
            <text x="8" y="30" fontSize="25">T</text>
            <text x="23" y="30" fontSize="19">T</text>
          </CaseIcon>
          <CaseIcon className="ml-[66px]">
            <text x="8" y="30" fontSize="25">T</text>
            <text x="27" y="20" fontSize="13">1</text>
          </CaseIcon>
          <CaseIcon className="ml-[11px]">
            <text x="7" y="30" fontSize="25">T</text>
            <text x="26" y="33" fontSize="13">1</text>
          </CaseIcon>
          <CaseIcon className="ml-[73px]">
            <text x="5" y="29" fontSize="24">T</text>
            <path d="M5 33 H24 V35 H5z" />
          </CaseIcon>
          <CaseIcon className="ml-[11px]">
            <text x="5" y="30" fontSize="24">T</text>
            <path d="M5 20 H24 V22 H5z" />
          </CaseIcon>
        </div>
        <hr className="mt-[2px] border-t-2 border-[#4b4b4b]" />
        <div className="mt-[12px] flex items-center">
          <Field className="w-[204px]" value="Español" plain pad="pl-[11px]" />
          <Svg box="0 0 26 30" className="mr-[12px] ml-[25px] h-[30px] w-[26px] text-[#c0c0c0]">
            <g {...solid} className="font-['Noto_Sans',sans-serif]">
              <text x="0" y="17" fontSize="20">a</text>
              <text x="13" y="25" fontSize="20" className="font-bold">a</text>
            </g>
          </Svg>
          <Field className="w-[164px]" value="Enfocado" plain pad="pl-[11px]" />
        </div>
      </div>
    </div>
  );
}

/* ---------- canvas ---------- */

const headline = "absolute left-[86px] text-[69px] font-black tracking-[4.2px] [word-spacing:-4px] text-[#52a58b] [-webkit-text-stroke:1.2px_#52a58b]";

function Artboard() {
  return (
    <div className="absolute top-[445px] left-[1424px] h-[1347px] w-[1341px] border-2 border-[#0a0a0a] bg-white font-['Inter','Noto_Sans',sans-serif] leading-none">
      <p className={cx(headline, "top-[84px]")}>Life is better in running shoes</p>
      <div className="absolute top-[237px] left-[87px] h-[54px] w-[383px]">
        <p className="pt-[2px] text-[55px] font-extrabold tracking-[9.4px] text-[#ca4f43] italic [-webkit-text-stroke:0.8px_#ca4f43]">SNEAKERS</p>
        <i className="absolute top-[50px] left-0 h-[2px] w-full bg-[#6f7ae0]" />
      </div>
      <p className={cx(headline, "top-[387px]")}>Life is better in running shoes</p>
      <Svg box="0 0 28 42" className="absolute top-[290px] left-[342px] h-[42px] w-[28px] text-black">
        <path d="M1 1 V32 L8 24 L22 22z M17 31 H27 V40 H17z" {...solid} />
      </Svg>
    </div>
  );
}

function BrandBadge() {
  return (
    <div className="absolute top-[1879px] left-[3549px] flex size-[206px] items-center justify-center rounded-full bg-[#fdfdfd] shadow-[inset_0_0_16px_rgba(0,0,0,0.12)]">
      <Svg box="0 0 297 204" className="h-[68px] w-[99px]">
        <path d="M0 100 L66 0 L148 110 L230 0 L297 100 L219 204 H79z" fill="#b80000" stroke="none" />
      </Svg>
    </div>
  );
}

export default function App() {
  return (
    <div className="relative flex h-[2160px] w-[3840px] flex-col overflow-hidden bg-[#525252] font-['Noto_Sans',sans-serif] tracking-[0.1px] whitespace-nowrap">
      <MenuBar />
      <TitleBar />
      <ControlBar />
      <div className="flex min-h-0 flex-1">
        <Toolbar />
        <div className="flex min-w-0 flex-1 flex-col">
          <div className="flex h-[54px] shrink-0 border-b-2 border-[#3a3a3a] bg-[#424242]">
            <div className="flex w-[600px] items-center border-r-2 border-[#3a3a3a] bg-[#525252] pb-[2px] pl-[14px] text-[19.5px] font-semibold tracking-[0.4px] text-[#ececec]">
              <Svg box="0 0 12 12" className="mr-[19px] size-[12px]">
                <path d="M1 1 L11 11 M11 1 L1 11" strokeWidth={2.2} />
              </Svg>
              Sin título–10* al 100% (CMYK/Previsualización de GPU)
            </div>
          </div>
          <div className="flex min-h-0 flex-1">
            <div className="flex-1 bg-[#5f5f5f]" />
            <div className="flex w-[29px] flex-col items-center justify-between bg-[#4b4b4b] py-[8px]">
              <Chevron dir="up" className="text-[#9a9a9a]" />
              <Chevron className="text-[#9a9a9a]" />
            </div>
          </div>
          <StatusBar />
        </div>
        <div className="flex w-[551px] shrink-0 flex-col border-l-[6px] border-[#414141]">
          <div className="flex h-[22px] shrink-0 items-center justify-between border-b-2 border-[#3a3a3a] bg-[#424242] pr-[12px] pl-[46px]">
            <Double dir="left" />
            <Double dir="right" />
          </div>
          <div className="flex min-h-0 flex-1">
            <Dock />
            <PropertiesPanel />
          </div>
        </div>
      </div>
      <Artboard />
      <SwatchesPanel />
      <CharacterPanel />
      <BrandBadge />
    </div>
  );
}
